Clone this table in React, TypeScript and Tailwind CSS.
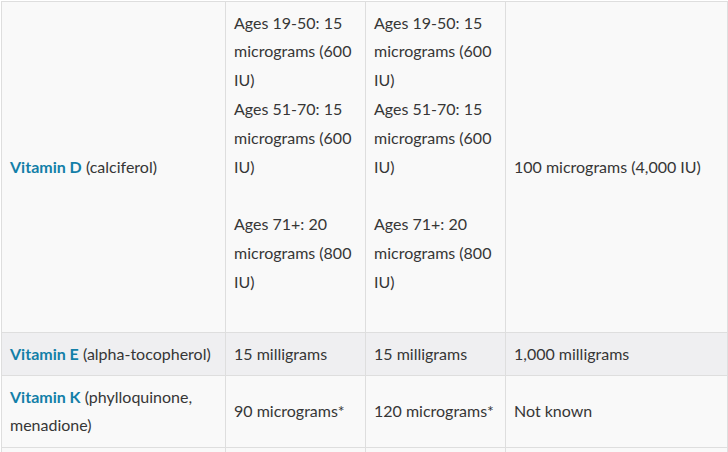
import React from 'react';

const Link = ({ children }: { children: React.ReactNode }) => (
  <a href="#" className="font-bold text-[#137fa8] no-underline">{children}</a>
);

const App = () => {
  const cell = "border border-[#dedede] px-2 py-[6.6px] align-middle";

  return (
    <div className="min-h-screen bg-white pl-[1px] pt-[1px] font-['Lato','Liberation_Sans',sans-serif] text-[16px] leading-[28.8px] text-[#363636]">
      <table className="w-[726px] table-fixed border-collapse">
        <colgroup>
          <col className="w-[224px]" />
          <col className="w-[140px]" />
          <col className="w-[140px]" />
          <col className="w-[222px]" />
        </colgroup>
        <tbody>
          {/* Vitamin D */}
          <tr className="bg-[#f9f9f9]">
            <td className={cell}>
              <Link>Vitamin D</Link> (calciferol)
            </td>
            <td className={cell}>
              Ages 19-50: 15 micrograms (600 IU)
              <br />
              Ages 51-70: 15 micrograms (600 IU)
              <br />
              <br />
              Ages 71+: 20 micrograms (800 IU)
              <br />
              <br />
            </td>
            <td className={cell}>
              Ages 19-50: 15 micrograms (600 IU)
              <br />
              Ages 51-70: 15 micrograms (600 IU)
              <br />
              <br />
              Ages 71+: 20 micrograms (800 IU)
              <br />
              <br />
            </td>
            <td className={cell}>100 micrograms (4,000 IU)</td>
          </tr>

          {/* Vitamin E */}
          <tr className="bg-[#efeff1]">
            <td className={cell}>
              <Link>Vitamin E</Link> (alpha-tocopherol)
            </td>
            <td className={cell}>15 milligrams</td>
            <td className={cell}>15 milligrams</td>
            <td className={cell}>1,000 milligrams</td>
          </tr>

          {/* Vitamin K */}
          <tr className="bg-[#f9f9f9]">
            <td className={cell}>
              <Link>Vitamin K</Link> (phylloquinone, menadione)
            </td>
            <td className={cell}>90 micrograms*</td>
            <td className={cell}>120 micrograms*</td>
            <td className={cell}>Not known</td>
          </tr>

          {/* next row, only its top edge is on screen */}
          <tr className="bg-[#f9f9f9]">
            <td className={`${cell} h-[43px]`}></td>
            <td className={cell}></td>
            <td className={cell}></td>
            <td className={cell}></td>
          </tr>
        </tbody>
      </table>
    </div>
  );
};

export default App;
